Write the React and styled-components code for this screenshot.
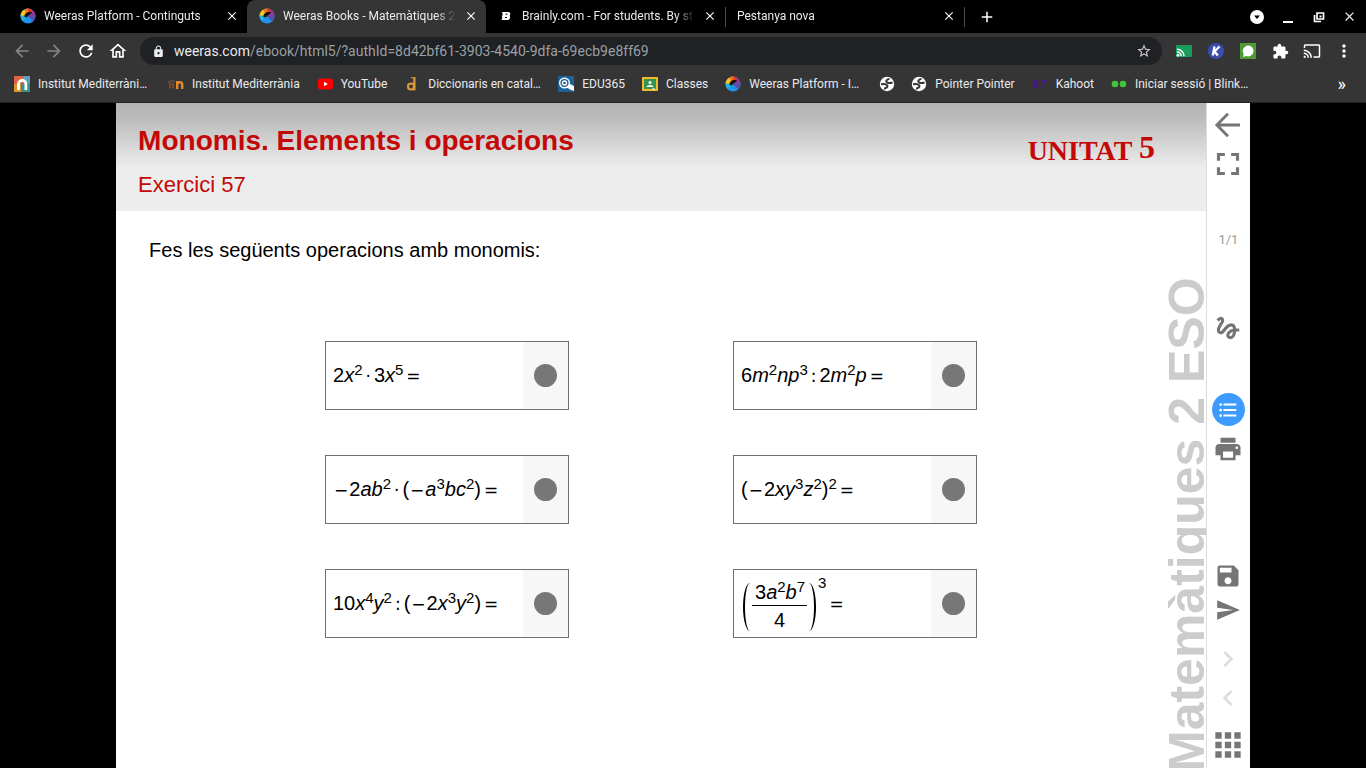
import React from 'react'
import styled, { createGlobalStyle } from 'styled-components'
import {
  MdAdd,
  MdApps,
  MdArrowBack,
  MdArrowForward,
  MdCast,
  MdClose,
  MdExtension,
  MdFormatListBulleted,
  MdFullscreen,
  MdGesture,
  MdKeyboardArrowLeft,
  MdKeyboardArrowRight,
  MdLock,
  MdMoreVert,
  MdOutlineHome,
  MdPrint,
  MdRefresh,
  MdSave,
  MdSend,
  MdStarBorder,
} from 'react-icons/md'

const GlobalStyle = createGlobalStyle`
  * {
    box-sizing: border-box;
  }

  body {
    margin: 0;
    background-color: #000;
    font-family: Roboto, sans-serif;
  }

  button {
    margin: 0;
    padding: 0;
    border: none;
    background: none;
    color: inherit;
    font: inherit;
    cursor: pointer;
  }
`;

const Screen = styled.div`
  display: flex;
  flex-direction: column;
  height: 100vh;
  overflow: hidden;
`;

/* ---------- browser ---------- */

const TabStrip = styled.div`
  display: flex;
  height: 33px;
  padding: 0 1px 0 8px;
  background-color: #000;
  color: #e8eaed;
`;

const Tab = styled.div`
  display: flex;
  align-items: center;
  flex: 0 1 239px;
  min-width: 0;
  padding: 0 8px 1px 12px;
  border-radius: 8px 8px 0 0;
  background-color: ${({ $active }) => ($active ? '#353535' : 'transparent')};
`;

const TabTitle = styled.span`
  flex: 1;
  min-width: 0;
  margin: 0 8px 0 ${({ $icon }) => ($icon ? '8px' : '0')};
  overflow: hidden;
  white-space: nowrap;
  font-size: 12px;
  line-height: 16px;
  mask-image: linear-gradient(to right, #000 calc(100% - 20px), transparent);
`;

const TabClose = styled.button`
  display: flex;
  flex: none;
  font-size: 14px;
  color: #fff;
`;

const TabDivider = styled.i`
  flex: none;
  align-self: center;
  width: 1px;
  height: 20px;
  margin-right: -1px;
  background-color: #4a4a4a;
`;

const NewTab = styled.button`
  display: flex;
  align-items: center;
  margin-left: 14px;
  font-size: 18px;
  color: #fff;
`;

const WindowButtons = styled.div`
  display: flex;
  align-items: center;
  margin-left: auto;
`;

const WindowButton = styled.button`
  display: flex;
  align-items: center;
  justify-content: center;
  width: 31px;
  height: 33px;
`;

const Toolbar = styled.div`
  display: flex;
  align-items: center;
  padding: 4px 6px 2px;
  background-color: #353535;
`;

const ToolButton = styled.button`
  display: flex;
  align-items: center;
  justify-content: center;
  flex: none;
  width: 32px;
  height: 28px;
  font-size: ${({ $size }) => $size || '20px'};
  color: ${({ $dim }) => ($dim ? '#868686' : '#fff')};
`;

const Omnibox = styled.label`
  display: flex;
  align-items: center;
  flex: 1;
  min-width: 0;
  height: 28px;
  margin: 0 6px;
  padding: 0 10px 0 12px;
  border-radius: 14px;
  background-color: #202124;
  color: #e8eaed;
  font-size: 14px;
`;

const Host = styled.span`
  margin-left: 9px;
`;

const UrlInput = styled.input`
  flex: 1;
  min-width: 0;
  padding: 0;
  border: none;
  outline: none;
  background: none;
  color: #9aa0a6;
  font: inherit;
`;

const StarButton = styled.button`
  display: flex;
  font-size: 16px;
  color: #d0d0d0;
`;

const Bookmarks = styled.nav`
  display: flex;
  align-items: center;
  gap: 16px;
  height: 36px;
  padding: 0 20px 2px 14px;
  border-bottom: 1px solid #242424;
  background-color: #353535;
`;

const Bookmark = styled.a`
  display: flex;
  align-items: center;
  gap: 8px;
  flex: none;
  color: #e8eaed;
  font-size: 12px;
  line-height: 16px;
  text-decoration: none;
  white-space: nowrap;

  span {
    width: ${({ $cut }) => ($cut ? '114px' : 'auto')};
    padding-right: ${({ $cut }) => ($cut ? '0' : '1px')};
  }
`;

const MoreBookmarks = styled.button`
  margin-left: auto;
  color: #fff;
  font-size: 18px;
  line-height: 16px;
`;

/* ---------- book ---------- */

const Viewer = styled.main`
  display: flex;
  flex: 1;
  min-height: 0;
  padding: 0 8.5vw;
  background-color: #000;
  font-family: "Liberation Sans", Arial, sans-serif;
`;

const Page = styled.article`
  display: flex;
  flex-direction: column;
  flex: 1;
  min-width: 0;
  overflow: hidden;
  background-color: #fff;
`;

const PageHeader = styled.header`
  display: flex;
  justify-content: space-between;
  flex: none;
  height: 108px;
  padding: 20px 51px 0 22px;
  background-image: linear-gradient(#b4b4b4, #bcbcbc 15%, #ededed 60%);
  color: #c40808;
`;

const Title = styled.h1`
  margin: 0;
  font-size: 28px;
  line-height: 36px;
`;

const Subtitle = styled.h2`
  margin: 12px 0 0;
  font-size: 22px;
  font-weight: normal;
  line-height: 28px;
`;

const Unit = styled.p`
  margin: 10px 0 0;
  font-family: "Liberation Serif", "Times New Roman", serif;
  font-size: 28px;
  font-weight: bold;
  line-height: 36px;

  span {
    font-size: 32px;
    vertical-align: 2px;
    line-height: 28px;
  }
`;

const PageBody = styled.div`
  display: flex;
  flex: 1;
  min-height: 0;
`;

const Exercise = styled.section`
  flex: 1;
  padding: 26px 15px 0 33px;
`;

const Statement = styled.p`
  margin: 0 0 78px;
  font-size: 20px;
  line-height: 26px;
`;

const Cards = styled.div`
  display: grid;
  grid-template-columns: 244px 244px;
  justify-content: center;
  gap: 45px 164px;
`;

const Card = styled.div`
  display: flex;
  height: 69px;
  border: 1px solid #6f6f6f;
`;

const Formula = styled.div`
  display: flex;
  align-items: center;
  flex: 1;
  padding-left: 7px;
  font-size: 20px;
  line-height: 24px;
  white-space: nowrap;

  sup {
    font-size: 15px;
    line-height: 0;
    vertical-align: 7px;
  }
`;

const Op = styled.span`
  margin: 0 ${({ $gap }) => $gap || '3px'};
  font-family: "DejaVu Sans", sans-serif;
  font-size: 17px;
`;

const Fraction = styled.span`
  display: inline-flex;
  flex-direction: column;
  align-items: center;
  margin-top: 6px;
`;

const Numerator = styled.span`
  padding: 0 2px 0 3px;
  border-bottom: 1px solid #000;
  line-height: 26px;
`;

const Denominator = styled.span`
  line-height: 28px;
`;

const TallParen = styled.i`
  width: 7px;
  height: 48px;
  margin: 6px 2px 0;
  border: 0 solid #000;
  ${({ $close }) => ($close
    ? 'border-right-width: 2px; border-radius: 0 7px 7px 0 / 0 24px 24px 0;'
    : 'border-left-width: 2px; border-radius: 7px 0 0 7px / 24px 0 0 24px;')}
`;

const Power = styled.span`
  align-self: flex-start;
  font-size: 15px;
  line-height: 26px;
`;

const Reveal = styled.button`
  display: flex;
  align-items: center;
  justify-content: center;
  width: 45px;
  background-color: #f7f7f7;

  &::before {
    content: '';
    width: 23px;
    height: 23px;
    border-radius: 50%;
    background-color: #777;
  }
`;

const Spine = styled.div`
  flex: none;
  width: 38px;
  margin: 66px 0 -8px;
  color: #ccc;
  font-size: 50px;
  font-weight: bold;
  line-height: 38px;
  text-align: right;
  white-space: nowrap;
  writing-mode: vertical-rl;
  transform: rotate(180deg);
`;

const SideBar = styled.aside`
  display: flex;
  flex-direction: column;
  flex: none;
  width: 44px;
  padding: 2px 0 4px;
  border-left: 1px solid #ddd;
  background-color: #fff;
  color: #757575;
`;

const SideButton = styled.button`
  display: flex;
  align-items: center;
  justify-content: center;
  flex: none;
  height: ${({ $compact }) => ($compact ? '34px' : '39px')};
  font-size: ${({ $size }) => $size || '26px'};
  color: ${({ $faded }) => ($faded ? '#ddd' : 'inherit')};
`;

const SideGroup = styled.div`
  display: flex;
  flex-direction: column;
  margin-top: ${({ $top }) => $top};
`;

const PageCount = styled.span`
  margin-top: 45px;
  color: #9a9a9a;
  font-family: Roboto, sans-serif;
  font-size: 13px;
  line-height: 24px;
  text-align: center;
`;

const Round = styled.span`
  display: flex;
  align-items: center;
  justify-content: center;
  width: 33px;
  height: 33px;
  border-radius: 50%;
  background-color: #3d9bff;
  color: #fff;
`;

/* ---------- icons ---------- */

const Glyph = styled.svg`
  flex: none;
`;

const Icon = ({ children, size = 16, box = 16 }) => (
  <Glyph width={size} height={size} viewBox={`0 0 ${box} ${box}`} aria-hidden="true">
    {children}
  </Glyph>
)

const WeerasIcon = () => (
  <Icon>
    <circle cx="8" cy="8" r="7.5" fill="#1f93ee" />
    <path d="M8 8L13 13.600A7.5 7.5 0 0 0 15.200 6z" fill="#5a4fa8" />
    <path d="M8 8l7.300-1.500A7.5 7.5 0 0 0 11.500 1.400z" fill="#a5308a" />
    <path d="M8 8l4-6.300A7.5 7.5 0 0 0 6.500.7z" fill="#e2382c" />
    <path d="M8 8L8.500.5A7.5 7.5 0 0 0 3 2.400z" fill="#f07a1f" />
    <path d="M8 8L4 1.700A7.5 7.5 0 0 0 .5 8z" fill="#f8c420" />
    <path d="M8 8L.5 7.500A7.5 7.5 0 0 0 2.500 13z" fill="#25b4e0" />
    <path d="M4.500 9C4 5.500 7.500 3 11.800 4.300 11.500 7 8 6.500 7.200 9.500z" fill="#141414" />
  </Icon>
)

const BrainlyIcon = () => (
  <Icon>
    <path d="M4 4h7l1.500 1.700-.8 2 .6 2.300-1.800 2H3.500l.9-2.700L3.500 8l1.300-1z" fill="#fff" />
    <path d="M7.500 6.200h2M7 9.500h2" stroke="#000" />
  </Icon>
)

const InstitutIcon = () => (
  <Icon>
    <rect width="16" height="16" fill="#3d8f8a" />
    <path d="M0 0h9v8H0z" fill="#e0623f" />
    <path d="M9 0h7v7H9z" fill="#5f9fc4" />
    <path d="M0 8h7v8H0z" fill="#d9942f" />
    <path d="M4.500 14V8a3.700 3.700 0 0 1 7.400 0v6" fill="none" stroke="#fff" strokeWidth="2.800" />
  </Icon>
)

const MoodleIcon = () => (
  <Icon>
    <path d="M2 6.500v6M5 6.500v6" stroke="#7a4a30" strokeWidth="2" />
    <path d="M0 6l5-1.500 2 1.500" fill="none" stroke="#5b5550" strokeWidth="1.500" />
    <path d="M9.200 13V5M9.200 8.500c0-3 5-3 5 0V13" fill="none" stroke="#e8862a" strokeWidth="2.400" />
  </Icon>
)

const YoutubeIcon = () => (
  <Icon>
    <rect x="1" y="2.500" width="15" height="11" rx="2.800" fill="#f00" />
    <path d="M7 5.800v4.400L10.800 8z" fill="#fff" />
  </Icon>
)

const DicIcon = () => (
  <Icon>
    <circle cx="7" cy="10.500" r="3" fill="none" stroke="#dd9a3c" strokeWidth="2.200" />
    <path d="M10.400 1v13.500" stroke="#dd9a3c" strokeWidth="2.200" />
    <path d="M7 1.800h3" stroke="#dd9a3c" strokeWidth="1.200" />
  </Icon>
)

const EduIcon = () => (
  <Icon>
    <rect width="16" height="16" fill="#1b6299" />
    <circle cx="6.500" cy="7" r="4.800" fill="none" stroke="#fff" strokeWidth="1.400" />
    <circle cx="6.500" cy="7" r="2" fill="none" stroke="#fff" strokeWidth="1.300" />
    <path d="M8 11l4-3 4 2v5l-4-1.500z" fill="#fff" />
  </Icon>
)

const ClassIcon = () => (
  <Icon>
    <rect y="1" width="16" height="14" rx="1" fill="#f2bb2b" />
    <rect x="2" y="3" width="12" height="10" fill="#35934f" />
    <circle cx="8" cy="6.500" r="1.500" fill="#fff" />
    <path d="M4.500 11c0-2.800 7-2.800 7 0z" fill="#fff" />
    <path d="M10 13h3" stroke="#fff" />
  </Icon>
)

const GlobeIcon = () => (
  <Icon>
    <circle cx="8" cy="8" r="7.200" fill="#fff" />
    <path d="M10.500 3C7 3.200 6.500 6 8.500 6.700s3 .5 5-.2" fill="none" stroke="#353535" strokeWidth="2" />
    <path d="M2 8.300c3-.6 5-.3 6 .9s.3 2.300-1 2.600-1.200 1-1.200 1.700" fill="none" stroke="#353535" strokeWidth="2" />
  </Icon>
)

const KahootIcon = () => (
  <Icon>
    <path d="M2 4v8M6 4L3 8l3 4M9 5h4.500L11 8.500M10.500 10.500v1.500" fill="none" stroke="#46178f" strokeWidth="1.800" />
  </Icon>
)

const BlinkIcon = () => (
  <Icon>
    <circle cx="4" cy="8" r="3.300" fill="#43c33b" />
    <circle cx="12" cy="8" r="3.300" fill="#43c33b" />
  </Icon>
)

const CastExtIcon = () => (
  <Icon>
    <rect y="2" width="16" height="12" rx="1" fill="#1a9c5b" />
    <path d="M1 6.200a7 7 0 0 1 7 7M1 9a4.200 4.200 0 0 1 4.200 4.200" fill="none" stroke="#fff" strokeWidth="1.500" />
    <circle cx="2" cy="12.300" r="1.400" fill="#fff" />
  </Icon>
)

const KamiIcon = () => (
  <Icon>
    <circle cx="8" cy="8" r="8" fill="#3a4db0" />
    <path d="M6.500 3.500L4.800 12.500M11.500 3.500L6.500 8.500l3.300 4" fill="none" stroke="#fff" strokeWidth="2.300" />
  </Icon>
)

const ChatIcon = () => (
  <Icon>
    <rect width="16" height="16" fill="#4f9a37" />
    <path d="M8 2.500a5.500 5.500 0 1 1-2 10.600L3 14l.7-3A5.500 5.500 0 0 1 8 2.500z" fill="#fff" />
  </Icon>
)

const ProfileIcon = () => (
  <Icon>
    <circle cx="8" cy="8" r="7" fill="#fff" />
    <path d="M5 6.500h6L8 10z" fill="#000" />
  </Icon>
)

const MinimizeIcon = () => (
  <Icon>
    <path d="M3 13h10" stroke="#fff" strokeWidth="2" />
  </Icon>
)

const RestoreIcon = () => (
  <Icon>
    <path d="M6 4h6.500v6H6zM3.500 6v6.500H10" fill="none" stroke="#fff" strokeWidth="1.700" />
    <path d="M8.500 6.500h2v2h-2z" fill="#fff" />
  </Icon>
)

const BackIcon = () => (
  <Icon size={28} box={28}>
    <path d="M26 14H3.500M14 2.800L2.800 14 14 25.200" fill="none" stroke="currentColor" strokeWidth="2.800" />
  </Icon>
)

/* ---------- data ---------- */

const tabs = [
  { title: 'Weeras Platform - Continguts', icon: <WeerasIcon /> },
  { title: 'Weeras Books - Matemàtiques 2', icon: <WeerasIcon />, active: true },
  { title: 'Brainly.com - For students. By st', icon: <BrainlyIcon />, divider: true },
  { title: 'Pestanya nova', divider: true },
]

const bookmarks = [
  { label: 'Institut Mediterràni…', icon: <InstitutIcon />, cut: true },
  { label: 'Institut Mediterrània', icon: <MoodleIcon /> },
  { label: 'YouTube', icon: <YoutubeIcon /> },
  { label: 'Diccionaris en catal…', icon: <DicIcon />, cut: true },
  { label: 'EDU365', icon: <EduIcon /> },
  { label: 'Classes', icon: <ClassIcon /> },
  { label: 'Weeras Platform - I…', icon: <WeerasIcon />, cut: true },
  { icon: <GlobeIcon /> },
  { label: 'Pointer Pointer', icon: <GlobeIcon /> },
  { label: 'Kahoot', icon: <KahootIcon /> },
  { label: 'Iniciar sessió | Blink…', icon: <BlinkIcon />, cut: true },
]

const formulas = [
  <span>2<i>x</i><sup>2</sup><Op>·</Op>3<i>x</i><sup>5</sup><Op>=</Op></span>,
  <span>6<i>m</i><sup>2</sup><i>np</i><sup>3</sup><Op>:</Op>2<i>m</i><sup>2</sup><i>p</i><Op>=</Op></span>,
  <span><Op $gap="1px">−</Op>2<i>ab</i><sup>2</sup><Op>·</Op>(<Op $gap="1px">−</Op><i>a</i><sup>3</sup><i>bc</i><sup>2</sup>)<Op>=</Op></span>,
  <span>(<Op $gap="1px">−</Op>2<i>xy</i><sup>3</sup><i>z</i><sup>2</sup>)<sup>2</sup><Op>=</Op></span>,
  <span>10<i>x</i><sup>4</sup><i>y</i><sup>2</sup><Op>:</Op>(<Op $gap="1px">−</Op>2<i>x</i><sup>3</sup><i>y</i><sup>2</sup>)<Op>=</Op></span>,
  <>
    <TallParen />
    <Fraction>
      <Numerator>3<i>a</i><sup>2</sup><i>b</i><sup>7</sup></Numerator>
      <Denominator>4</Denominator>
    </Fraction>
    <TallParen $close />
    <Power>3</Power>
    <Op>=</Op>
  </>,
]

/* ---------- sections ---------- */

const Browser = () => (
  <header>
    <TabStrip>
      {tabs.map(({ title, icon, active, divider }) => (
        <React.Fragment key={title}>
          <Tab $active={active}>
            {icon}
            <TabTitle $icon={!!icon}>{title}</TabTitle>
            <TabClose aria-label="Tanca"><MdClose /></TabClose>
          </Tab>
          {divider && <TabDivider />}
        </React.Fragment>
      ))}
      <NewTab aria-label="Pestanya nova"><MdAdd /></NewTab>
      <WindowButtons>
        <WindowButton aria-label="Perfil"><ProfileIcon /></WindowButton>
        <WindowButton aria-label="Minimitza"><MinimizeIcon /></WindowButton>
        <WindowButton aria-label="Restaura"><RestoreIcon /></WindowButton>
        <WindowButton aria-label="Tanca"><MdClose size={15} /></WindowButton>
      </WindowButtons>
    </TabStrip>
    <Toolbar>
      <ToolButton $dim aria-label="Enrere"><MdArrowBack /></ToolButton>
      <ToolButton $dim aria-label="Endavant"><MdArrowForward /></ToolButton>
      <ToolButton aria-label="Actualitza"><MdRefresh /></ToolButton>
      <ToolButton aria-label="Inici"><MdOutlineHome /></ToolButton>
      <Omnibox>
        <MdLock size={13} />
        <Host>weeras.com</Host>
        <UrlInput aria-label="Adreça" defaultValue="/ebook/html5/?authId=8d42bf61-3903-4540-9dfa-69ecb9e8ff69" />
        <StarButton aria-label="Afegeix"><MdStarBorder /></StarButton>
      </Omnibox>
      <ToolButton aria-label="Cast"><CastExtIcon /></ToolButton>
      <ToolButton aria-label="Kami"><KamiIcon /></ToolButton>
      <ToolButton aria-label="Xat"><ChatIcon /></ToolButton>
      <ToolButton $size="17px" aria-label="Extensions"><MdExtension /></ToolButton>
      <ToolButton $size="18px" aria-label="Emet"><MdCast /></ToolButton>
      <ToolButton aria-label="Menú"><MdMoreVert /></ToolButton>
    </Toolbar>
    <Bookmarks>
      {bookmarks.map(({ label, icon, cut }, i) => (
        <Bookmark key={i} href="#" $cut={cut}>
          {icon}
          {label && <span>{label}</span>}
        </Bookmark>
      ))}
      <MoreBookmarks>»</MoreBookmarks>
    </Bookmarks>
  </header>
)

const Tools = () => (
  <SideBar>
    <SideButton aria-label="Torna"><BackIcon /></SideButton>
    <SideButton $size="38px" aria-label="Pantalla completa"><MdFullscreen /></SideButton>
    <PageCount>1/1</PageCount>
    <SideGroup $top="56px">
      <SideButton $size="30px" aria-label="Dibuixa"><MdGesture /></SideButton>
    </SideGroup>
    <SideGroup $top="43px">
      <SideButton $size="22px" aria-label="Índex"><Round><MdFormatListBulleted /></Round></SideButton>
      <SideButton $size="30px" aria-label="Imprimeix"><MdPrint /></SideButton>
    </SideGroup>
    <SideGroup $top="auto">
      <SideButton $compact $size="28px" aria-label="Desa"><MdSave /></SideButton>
      <SideButton $compact aria-label="Envia"><MdSend /></SideButton>
    </SideGroup>
    <SideGroup $top="12px">
      <SideButton $faded $size="32px" aria-label="Següent"><MdKeyboardArrowRight /></SideButton>
      <SideButton $faded $size="32px" aria-label="Anterior"><MdKeyboardArrowLeft /></SideButton>
    </SideGroup>
    <SideGroup $top="8px">
      <SideButton $size="38px" aria-label="Pàgines"><MdApps /></SideButton>
    </SideGroup>
  </SideBar>
)

const App = () => (
  <Screen>
    <GlobalStyle />
    <Browser />
    <Viewer>
      <Page>
        <PageHeader>
          <div>
            <Title>Monomis. Elements i operacions</Title>
            <Subtitle>Exercici 57</Subtitle>
          </div>
          <Unit>UNITAT <span>5</span></Unit>
        </PageHeader>
        <PageBody>
          <Exercise>
            <Statement>Fes les següents operacions amb monomis:</Statement>
            <Cards>
              {formulas.map((formula, i) => (
                <Card key={i}>
                  <Formula>{formula}</Formula>
                  <Reveal aria-label="Mostra la solució" />
                </Card>
              ))}
            </Cards>
          </Exercise>
          <Spine>Matemàtiques 2 ESO</Spine>
        </PageBody>
      </Page>
      <Tools />
    </Viewer>
  </Screen>
)

export default App
